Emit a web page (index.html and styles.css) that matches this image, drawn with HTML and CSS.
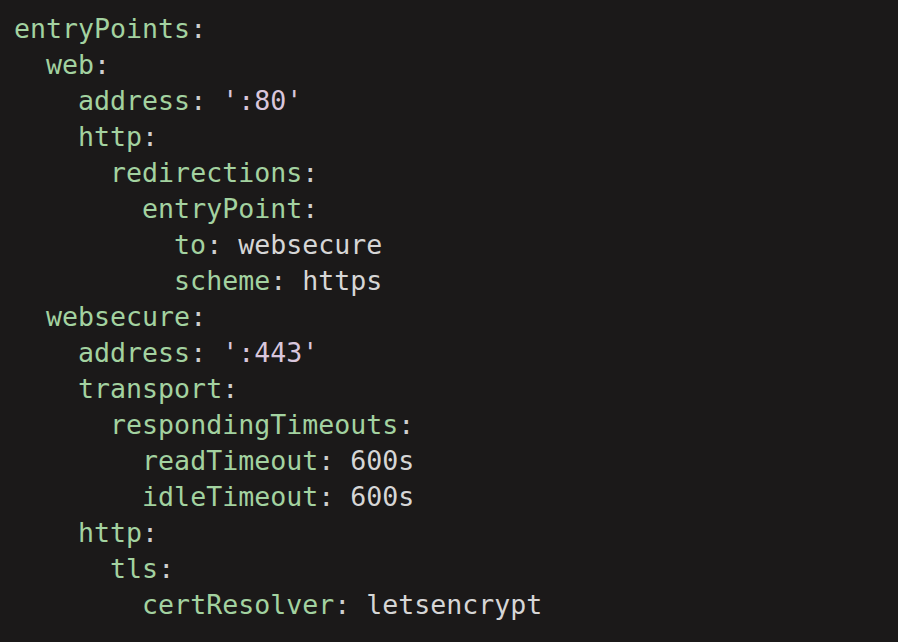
FILE: index.html
```html
<!DOCTYPE html>
<html>
<head>
<meta charset="utf-8">
<link rel="stylesheet" href="styles.css">
</head>
<body>
<pre class="code"><span class="k">entryPoints</span><span class="p">:</span>
  <span class="k">web</span><span class="p">:</span>
    <span class="k">address</span><span class="p">:</span> <span class="s">':80'</span>
    <span class="k">http</span><span class="p">:</span>
      <span class="k">redirections</span><span class="p">:</span>
        <span class="k">entryPoint</span><span class="p">:</span>
          <span class="k">to</span><span class="p">:</span> <span class="v">websecure</span>
          <span class="k">scheme</span><span class="p">:</span> <span class="v">https</span>
  <span class="k">websecure</span><span class="p">:</span>
    <span class="k">address</span><span class="p">:</span> <span class="s">':443'</span>
    <span class="k">transport</span><span class="p">:</span>
      <span class="k">respondingTimeouts</span><span class="p">:</span>
        <span class="k">readTimeout</span><span class="p">:</span> <span class="v">600s</span>
        <span class="k">idleTimeout</span><span class="p">:</span> <span class="v">600s</span>
    <span class="k">http</span><span class="p">:</span>
      <span class="k">tls</span><span class="p">:</span>
        <span class="k">certResolver</span><span class="p">:</span> <span class="v">letsencrypt</span></pre>
</body>
</html>
```
FILE: styles.css
```css
html, body {
  margin: 0;
  padding: 0;
  background: #1b1919;
  height: 100%;
}
.code {
  margin: 0;
  padding: 11px 14px;
  font-family: "DejaVu Sans Mono", "Liberation Mono", monospace;
  font-size: 26.6px;
  line-height: 36px;
  color: #d4d4d4;
}
.k { color: #a3d2a0; }
.p { color: #cfcfcf; }
.s { color: #d9c6dc; }
.v { color: #d6d6d6; }
```
